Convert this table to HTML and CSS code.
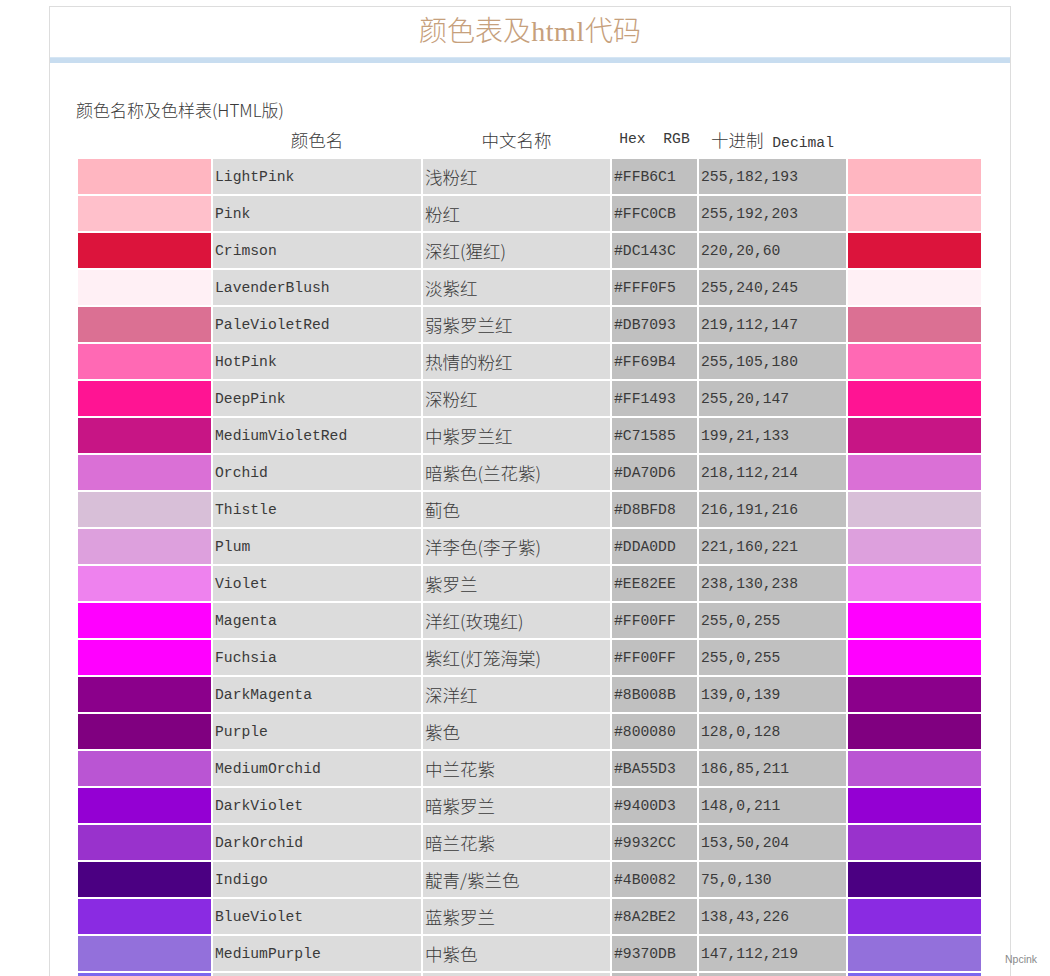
FILE: index.html
```html
<!DOCTYPE html>
<html lang="zh-CN">
<head>
<meta charset="utf-8">
<title>颜色表及html代码</title>
<link rel="stylesheet" href="styles.css">
</head>
<body>
<div class="page">
  <h1 class="title">颜色表及<span class="title-latin">html</span>代码</h1>
  <div class="bar"></div>
  <div class="content">
    <p class="subtitle">颜色名称及色样表(HTML版)</p>
    <table class="colors">
      <colgroup>
        <col class="c-sw"><col class="c-name"><col class="c-cn"><col class="c-hex"><col class="c-dec"><col class="c-sw">
      </colgroup>
      <thead>
        <tr>
          <th></th>
          <th class="h-cn">颜色名</th>
          <th class="h-cn">中文名称</th>
          <th class="h-mono">Hex&nbsp; RGB</th>
          <th class="h-mono"><span class="cjk">十进制</span> Decimal</th>
          <th></th>
        </tr>
      </thead>
      <tbody>
        <tr><td class="sw" style="background:#FFB6C1"></td><td class="name">LightPink</td><td class="cn">浅粉红</td><td class="hex">#FFB6C1</td><td class="dec">255,182,193</td><td class="sw" style="background:#FFB6C1"></td></tr>
        <tr><td class="sw" style="background:#FFC0CB"></td><td class="name">Pink</td><td class="cn">粉红</td><td class="hex">#FFC0CB</td><td class="dec">255,192,203</td><td class="sw" style="background:#FFC0CB"></td></tr>
        <tr><td class="sw" style="background:#DC143C"></td><td class="name">Crimson</td><td class="cn">深红(猩红)</td><td class="hex">#DC143C</td><td class="dec">220,20,60</td><td class="sw" style="background:#DC143C"></td></tr>
        <tr><td class="sw" style="background:#FFF0F5"></td><td class="name">LavenderBlush</td><td class="cn">淡紫红</td><td class="hex">#FFF0F5</td><td class="dec">255,240,245</td><td class="sw" style="background:#FFF0F5"></td></tr>
        <tr><td class="sw" style="background:#DB7093"></td><td class="name">PaleVioletRed</td><td class="cn">弱紫罗兰红</td><td class="hex">#DB7093</td><td class="dec">219,112,147</td><td class="sw" style="background:#DB7093"></td></tr>
        <tr><td class="sw" style="background:#FF69B4"></td><td class="name">HotPink</td><td class="cn">热情的粉红</td><td class="hex">#FF69B4</td><td class="dec">255,105,180</td><td class="sw" style="background:#FF69B4"></td></tr>
        <tr><td class="sw" style="background:#FF1493"></td><td class="name">DeepPink</td><td class="cn">深粉红</td><td class="hex">#FF1493</td><td class="dec">255,20,147</td><td class="sw" style="background:#FF1493"></td></tr>
        <tr><td class="sw" style="background:#C71585"></td><td class="name">MediumVioletRed</td><td class="cn">中紫罗兰红</td><td class="hex">#C71585</td><td class="dec">199,21,133</td><td class="sw" style="background:#C71585"></td></tr>
        <tr><td class="sw" style="background:#DA70D6"></td><td class="name">Orchid</td><td class="cn">暗紫色(兰花紫)</td><td class="hex">#DA70D6</td><td class="dec">218,112,214</td><td class="sw" style="background:#DA70D6"></td></tr>
        <tr><td class="sw" style="background:#D8BFD8"></td><td class="name">Thistle</td><td class="cn">蓟色</td><td class="hex">#D8BFD8</td><td class="dec">216,191,216</td><td class="sw" style="background:#D8BFD8"></td></tr>
        <tr><td class="sw" style="background:#DDA0DD"></td><td class="name">Plum</td><td class="cn">洋李色(李子紫)</td><td class="hex">#DDA0DD</td><td class="dec">221,160,221</td><td class="sw" style="background:#DDA0DD"></td></tr>
        <tr><td class="sw" style="background:#EE82EE"></td><td class="name">Violet</td><td class="cn">紫罗兰</td><td class="hex">#EE82EE</td><td class="dec">238,130,238</td><td class="sw" style="background:#EE82EE"></td></tr>
        <tr><td class="sw" style="background:#FF00FF"></td><td class="name">Magenta</td><td class="cn">洋红(玫瑰红)</td><td class="hex">#FF00FF</td><td class="dec">255,0,255</td><td class="sw" style="background:#FF00FF"></td></tr>
        <tr><td class="sw" style="background:#FF00FF"></td><td class="name">Fuchsia</td><td class="cn">紫红(灯笼海棠)</td><td class="hex">#FF00FF</td><td class="dec">255,0,255</td><td class="sw" style="background:#FF00FF"></td></tr>
        <tr><td class="sw" style="background:#8B008B"></td><td class="name">DarkMagenta</td><td class="cn">深洋红</td><td class="hex">#8B008B</td><td class="dec">139,0,139</td><td class="sw" style="background:#8B008B"></td></tr>
        <tr><td class="sw" style="background:#800080"></td><td class="name">Purple</td><td class="cn">紫色</td><td class="hex">#800080</td><td class="dec">128,0,128</td><td class="sw" style="background:#800080"></td></tr>
        <tr><td class="sw" style="background:#BA55D3"></td><td class="name">MediumOrchid</td><td class="cn">中兰花紫</td><td class="hex">#BA55D3</td><td class="dec">186,85,211</td><td class="sw" style="background:#BA55D3"></td></tr>
        <tr><td class="sw" style="background:#9400D3"></td><td class="name">DarkViolet</td><td class="cn">暗紫罗兰</td><td class="hex">#9400D3</td><td class="dec">148,0,211</td><td class="sw" style="background:#9400D3"></td></tr>
        <tr><td class="sw" style="background:#9932CC"></td><td class="name">DarkOrchid</td><td class="cn">暗兰花紫</td><td class="hex">#9932CC</td><td class="dec">153,50,204</td><td class="sw" style="background:#9932CC"></td></tr>
        <tr><td class="sw" style="background:#4B0082"></td><td class="name">Indigo</td><td class="cn">靛青/紫兰色</td><td class="hex">#4B0082</td><td class="dec">75,0,130</td><td class="sw" style="background:#4B0082"></td></tr>
        <tr><td class="sw" style="background:#8A2BE2"></td><td class="name">BlueViolet</td><td class="cn">蓝紫罗兰</td><td class="hex">#8A2BE2</td><td class="dec">138,43,226</td><td class="sw" style="background:#8A2BE2"></td></tr>
        <tr><td class="sw" style="background:#9370DB"></td><td class="name">MediumPurple</td><td class="cn">中紫色</td><td class="hex">#9370DB</td><td class="dec">147,112,219</td><td class="sw" style="background:#9370DB"></td></tr>
        <tr><td class="sw" style="background:#7B68EE"></td><td class="name"></td><td class="cn"></td><td class="hex"></td><td class="dec"></td><td class="sw" style="background:#7B68EE"></td></tr>
      </tbody>
    </table>
  </div>
</div>
<div class="watermark">Npcink</div>
</body>
</html>
```

FILE: styles.css
```css
html, body {
  margin: 0;
  padding: 0;
  background: #ffffff;
}

body {
  font-family: "Noto Sans CJK SC", "Liberation Sans", sans-serif;
  color: #3a3a3a;
  overflow: hidden;
  height: 976px;
  position: relative;
}

.page {
  margin: 6px 0 0 49px;
  width: 960px;
  border: 1px solid #dddddd;
  border-bottom: none;
  background: #ffffff;
}

.title {
  margin: 0;
  height: 50px;
  line-height: 44px;
  text-align: center;
  font-family: "Noto Sans CJK SC", serif;
  font-weight: 300;
  font-size: 28px;
  color: #c6a07c;
}

.title-latin {
  font-family: "Liberation Serif", serif;
  font-weight: normal;
  letter-spacing: 0.6px;
}

.bar {
  height: 5px;
  background: #c8ddf0;
  border-top: 1px solid #d6e6f4;
}

.content {
  padding: 37px 0 0 26px;
}

.subtitle {
  margin: 0;
  height: 22px;
  line-height: 20px;
  font-size: 17px;
  font-weight: 300;
  color: #3a3a3a;
}

.colors {
  width: 907px;
  table-layout: fixed;
  border-collapse: separate;
  border-spacing: 2px;
}

.c-sw { width: 133px; }
.c-name { width: 208px; }
.c-cn { width: 187px; }
.c-hex { width: 85px; }
.c-dec { width: 147px; }

.colors th {
  height: 30px;
  padding: 0 0 3px 0;
  font-weight: 300;
  text-align: center;
  vertical-align: middle;
  white-space: nowrap;
  color: #3a3a3a;
}

.colors th.h-cn {
  font-size: 17.5px;
  font-weight: 300;
}

.colors th.h-mono {
  font-family: "Liberation Mono", monospace;
  font-size: 14.7px;
  font-weight: normal;
}

.cjk {
  font-family: "Noto Sans CJK SC", sans-serif;
  font-size: 17.5px;
  font-weight: 300;
}

.colors td {
  height: 35px;
  padding: 0 0 0 2px;
  vertical-align: middle;
  white-space: nowrap;
  overflow: hidden;
  color: #3a3a3a;
}

.colors td.sw {
  padding: 0;
}

.name,
.cn {
  background: #dcdcdc;
}

.hex,
.dec {
  background: #c0c0c0;
}

.name,
.hex,
.dec {
  font-family: "Liberation Mono", monospace;
  font-size: 14.7px;
}

.cn {
  font-size: 17.5px;
  font-weight: 300;
}

.watermark {
  position: absolute;
  left: 1005px;
  top: 953px;
  font-family: "Liberation Sans", sans-serif;
  font-size: 10.5px;
  color: #8a8a8a;
}
```
